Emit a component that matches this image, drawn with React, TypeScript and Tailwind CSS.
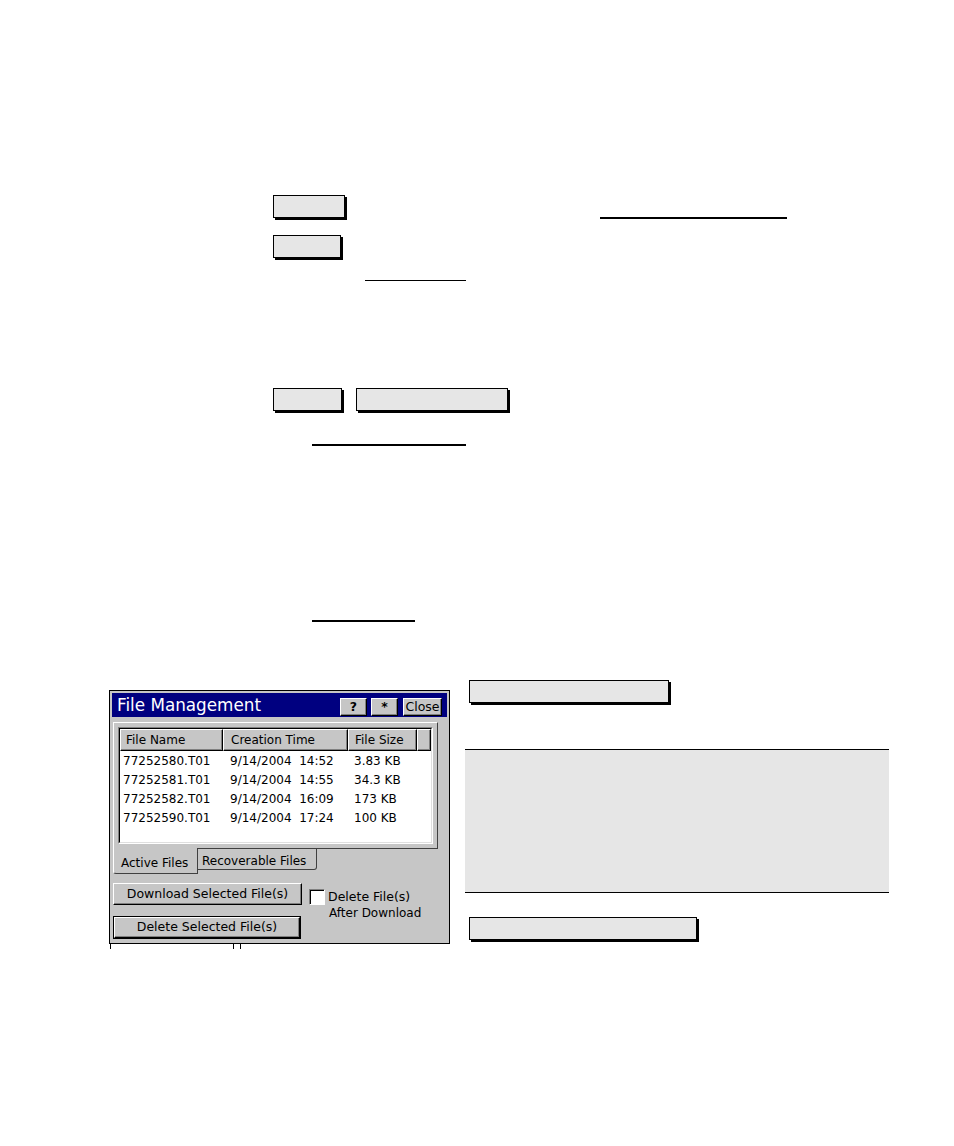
import React from "react";

// raised 3D edge used by the CE buttons and list headers
const raised =
  "border border-t-white border-l-white border-r-black border-b-black shadow-[inset_-1px_-1px_0_#808080]";

const files = [
  { name: "77252580.T01", time: "9/14/2004  14:52", size: "3.83 KB" },
  { name: "77252581.T01", time: "9/14/2004  14:55", size: "34.3 KB" },
  { name: "77252582.T01", time: "9/14/2004  16:09", size: "173 KB" },
  { name: "77252590.T01", time: "9/14/2004  17:24", size: "100 KB" },
];

function Field({ w, className = "" }: { w: string; className?: string }) {
  return (
    <div
      className={`${w} h-[23px] border border-black bg-[#e6e6e6] shadow-[2px_2px_0_#000] ${className}`}
    />
  );
}

function TitleBtn({ w, children }: { w: string; children: React.ReactNode }) {
  return (
    <div
      className={`${w} flex h-[18px] items-center justify-center bg-[#c6c6c6] text-[12.5px] leading-none text-black ${raised}`}
    >
      {children}
    </div>
  );
}

function FileManagement() {
  return (
    <div className="w-[341px] border border-black bg-[#c6c6c6] p-[2px] font-['DejaVu_Sans',sans-serif] text-black">
      {/* title bar */}
      <div className="flex h-[24px] items-end bg-[#000080] pb-[1px] pl-[5px] pr-[5px]">
        <span className="mt-[1px] self-center text-[16.8px] leading-none text-white">File Management</span>
        <div className="ml-auto flex">
          <TitleBtn w="w-[27px]">
            <span className="font-bold">?</span>
          </TitleBtn>
          <div className="ml-[4px]">
            <TitleBtn w="w-[27px]">
              <span className="font-bold">*</span>
            </TitleBtn>
          </div>
          <div className="ml-[5px]">
            <TitleBtn w="w-[39px]">Close</TitleBtn>
          </div>
        </div>
      </div>

      <div className="ml-[1px] mt-[5px] w-[325px] pb-[2px]">
        {/* tab page */}
        <div className="h-[126px] border-l border-r border-t border-l-white border-r-[#404040] border-t-white px-[4px] pt-[4px]">
          <div className="h-[117px] border border-b-white border-l-[#808080] border-r-white border-t-[#808080]">
            <div className="h-full border border-b-[#dfdfdf] border-l-black border-r-[#dfdfdf] border-t-black bg-white">
              <div className="flex h-[22px] text-[12px] leading-none">
                <div className={`flex w-[103px] items-center bg-[#c6c6c6] pl-[5px] ${raised}`}>File Name</div>
                <div className={`flex w-[125px] items-center bg-[#c6c6c6] pl-[7px] ${raised}`}>Creation Time</div>
                <div className={`flex w-[69px] items-center bg-[#c6c6c6] pl-[6px] ${raised}`}>File Size</div>
                <div className={`flex-1 bg-[#c6c6c6] ${raised}`} />
              </div>
              {files.map((f) => (
                <div key={f.name} className="flex h-[19px] items-center text-[12px] leading-none">
                  <div className="w-[103px] pl-[3px]">{f.name}</div>
                  <div className="w-[125px] whitespace-pre pl-[7px]">{f.time}</div>
                  <div className="w-[69px] pl-[6px]">{f.size}</div>
                </div>
              ))}
            </div>
          </div>
        </div>

        {/* bottom tabs */}
        <div className="flex items-start">
          <div className="flex h-[26px] w-[85px] items-center rounded-bl-[3px] border-b border-l border-r border-b-[#404040] border-l-white border-r-[#404040] pl-[7px] pt-[4px] text-[12px] leading-none">
            Active Files
          </div>
          <div className="flex h-[22px] w-[119px] items-center rounded-br-[3px] border-b border-r border-t border-[#404040] pl-[4px] pt-[3px] text-[12px] leading-none">
            Recoverable Files
          </div>
          <div className="h-px flex-1 bg-[#404040]" />
        </div>

        {/* actions */}
        <div className="mt-[9px] flex items-start">
          <div className="flex flex-col gap-[11px]">
            <div className={`flex h-[22px] w-[189px] items-center justify-center text-[12.5px] leading-none ${raised}`}>
              Download Selected File(s)
            </div>
            <div className="h-[23px] w-[188px] border border-black">
              <div className={`flex h-full items-center justify-center text-[12.5px] leading-none ${raised}`}>
                Delete Selected File(s)
              </div>
            </div>
          </div>
          <div className="ml-[7px] mt-[6px] flex items-start">
            <div className="h-[16px] w-[16px] border border-b-white border-l-[#808080] border-r-white border-t-[#808080] bg-white shadow-[inset_1px_1px_0_#000]" />
            <div className="ml-[3px] text-[12.5px] leading-[16px]">
              <div>Delete File(s)</div>
              <div className="pl-[1px] text-[12px]">After Download</div>
            </div>
          </div>
        </div>
      </div>
    </div>
  );
}

export default function App() {
  return (
    <div className="h-[1146px] w-[954px] overflow-hidden bg-white">
      {/* redacted form fields and links */}
      <div className="pl-[273px] pt-[195px]">
        <div className="flex">
          <Field w="w-[72px]" />
          <div className="ml-[255px] mt-[22px] h-[1.5px] w-[187px] bg-black" />
        </div>
        <Field w="w-[68px]" className="mt-[16px]" />
        <div className="ml-[92px] mt-[22px] h-[1.5px] w-[101px] bg-black" />
        <div className="mt-[107px] flex gap-[14px]">
          <Field w="w-[69px]" />
          <Field w="w-[152px]" />
        </div>
        <div className="ml-[39px] mt-[33px] h-[1.5px] w-[154px] bg-black" />
        <div className="ml-[39px] mt-[174.5px] h-[1.5px] w-[103px] bg-black" />
      </div>

      {/* screenshot + callouts */}
      <div className="mt-[58.5px] flex items-start">
        <div className="ml-[109px] mt-[10px]">
          <FileManagement />
          <div className="flex h-[5px]">
            <div className="ml-[1px] w-[123px] border-l border-black" />
            <div className="w-px bg-black" />
            <div className="ml-[6px] w-px bg-black" />
          </div>
        </div>
        <div className="ml-[15px] w-[424px]">
          <Field w="w-[200px]" className="ml-[4px]" />
          <div className="mt-[46px] h-[144px] border-y border-black bg-[#e6e6e6]" />
          <Field w="w-[228px]" className="ml-[4px] mt-[24px]" />
        </div>
      </div>
    </div>
  );
}
